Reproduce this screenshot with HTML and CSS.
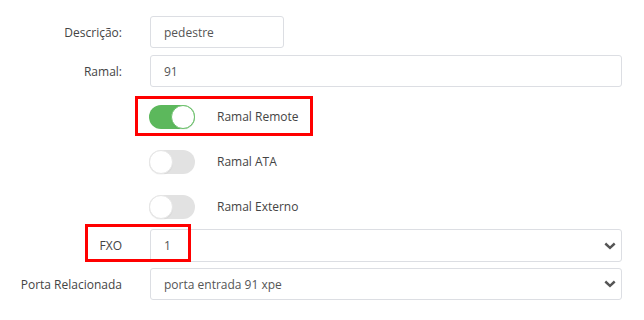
FILE: index.html
```html
<!DOCTYPE html>
<html lang="pt">
<head>
<meta charset="utf-8">
<link rel="stylesheet" href="styles.css">
</head>
<body>
<div class="form">
  <div class="row r-desc">
    <label class="lbl">Descrição:</label>
    <div class="field short"><span class="val">pedestre</span></div>
  </div>
  <div class="row r-ramal">
    <label class="lbl">Ramal:</label>
    <div class="field"><span class="val">91</span></div>
  </div>
  <div class="trow first">
    <span class="toggle on"><span class="knob"></span></span>
    <span class="tlabel">Ramal Remote</span>
    <span class="mark mark-remote"></span>
  </div>
  <div class="trow">
    <span class="toggle"><span class="knob"></span></span>
    <span class="tlabel">Ramal ATA</span>
  </div>
  <div class="trow">
    <span class="toggle"><span class="knob"></span></span>
    <span class="tlabel">Ramal Externo</span>
  </div>
  <div class="row r-fxo">
    <label class="lbl">FXO</label>
    <div class="field select"><span class="val">1</span>
      <svg class="chev" width="12" height="8" viewBox="0 0 12 8"><path d="M1.3 1.5 L6 5.9 L10.7 1.5" fill="none" stroke="#555" stroke-width="2.4"/></svg>
    </div>
    <span class="mark mark-fxo"></span>
  </div>
  <div class="row r-porta">
    <label class="lbl">Porta Relacionada</label>
    <div class="field select"><span class="val">porta entrada 91 xpe</span>
      <svg class="chev" width="12" height="8" viewBox="0 0 12 8"><path d="M1.3 1.5 L6 5.9 L10.7 1.5" fill="none" stroke="#555" stroke-width="2.4"/></svg>
    </div>
  </div>
</div>
</body>
</html>
```
FILE: styles.css
```css
* { box-sizing: border-box; }
body {
  margin: 0;
  background: #fff;
  font-family: "Open Sans", "Liberation Sans", sans-serif;
  font-size: 12px;
  color: #444;
}
.form {
  position: relative;
  padding-top: 16px;
  width: 644px;
}
.row {
  position: relative;
  display: flex;
  align-items: center;
  height: 32px;
}
.r-ramal { margin-top: 7px; }
.r-fxo { height: 33px; }
.r-porta { margin-top: 6px; }
.lbl {
  width: 150px;
  padding-right: 28px;
  text-align: right;
  color: #444;
  flex: none;
}
.field {
  width: 472px;
  height: 100%;
  border: 1px solid #dcdee3;
  border-radius: 3px;
  display: flex;
  align-items: center;
  padding-left: 13px;
  padding-right: 5px;
  color: #555;
}
.field.short { width: 134px; }
.select { justify-content: space-between; }
.chev { flex: none; }
.trow {
  position: relative;
  display: flex;
  align-items: center;
  height: 45px;
  padding-left: 149px;
}
.trow.first { margin-top: 7px; }
.toggle {
  position: relative;
  width: 46px;
  height: 24px;
  border-radius: 12px;
  background: #e2e2e2;
  flex: none;
}
.toggle .knob {
  position: absolute;
  left: 0;
  top: 0;
  width: 24px;
  height: 24px;
  border-radius: 50%;
  background: #fff;
  border: 1px solid #e6e6e6;
  box-shadow: 0 1px 1px rgba(0,0,0,0.04);
}
.toggle.on { background: #5cb85c; }
.toggle.on .knob { left: 22px; border-color: #6cc16c; }
.tlabel {
  margin-left: 22px;
  color: #444;
}
.mark {
  position: absolute;
  border: 3px solid #f00;
  pointer-events: none;
}
.mark-remote {
  left: 135px;
  top: 2px;
  width: 178px;
  height: 40px;
}
.mark-fxo {
  left: 85px;
  top: -5px;
  width: 106px;
  height: 38px;
}
```
